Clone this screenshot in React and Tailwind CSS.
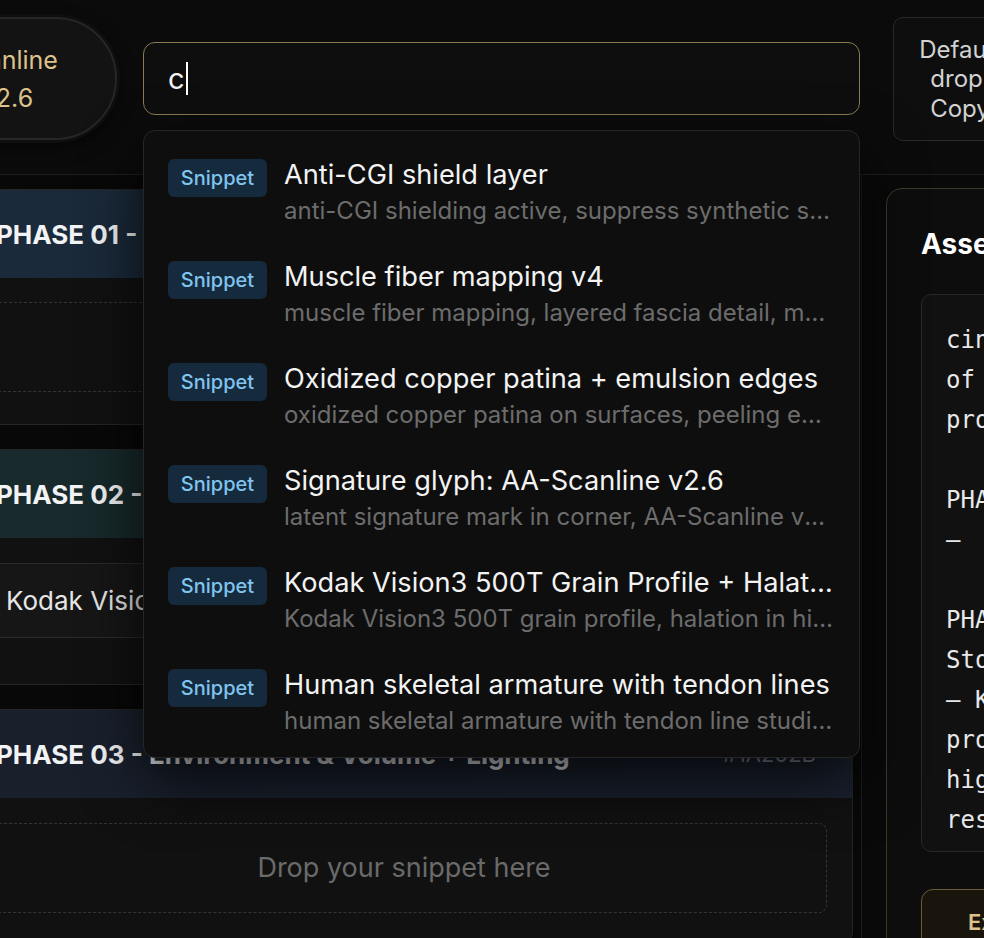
const ITEMS = [
  {
    title: "Anti-CGI shield layer",
    sub: "anti-CGI shielding active, suppress synthetic sheen and plastic rendering",
  },
  {
    title: "Muscle fiber mapping v4",
    sub: "muscle fiber mapping, layered fascia detail, motion-aware striation",
  },
  {
    title: "Oxidized copper patina + emulsion edges",
    sub: "oxidized copper patina on surfaces, peeling emulsion edges",
  },
  {
    title: "Signature glyph: AA-Scanline v2.6",
    sub: "latent signature mark in corner, AA-Scanline v2.6 glyph embedded",
  },
  {
    title: "Kodak Vision3 500T Grain Profile + Halation Bloom",
    sub: "Kodak Vision3 500T grain profile, halation in highlights, soft bloom",
  },
  {
    title: "Human skeletal armature with tendon lines",
    sub: "human skeletal armature with tendon line studies, anatomical overlay",
  },
];

const PROMPT = [
  "cinematic still",
  "of an android",
  "protagonist,",
  "",
  "PHASE 01 - Core",
  "\u2013  anti-CGI",
  "",
  "PHASE 02 - Film",
  "Stock & Grain",
  "\u2013 Kodak Vision3",
  "profile,",
  "highlights,",
  "restrained",
  "grain",
];

function Dropzone() {
  return (
    <div className="h-[90px] rounded-lg border border-dashed border-[#343434] flex items-center justify-center text-[27px] text-[#6a6a6a] whitespace-nowrap">
      Drop your snippet here
    </div>
  );
}

function PhaseHeader({ title, tag, bg }) {
  return (
    <div className={"h-[88px] flex items-center justify-between pl-[40px] pr-[36px] " + bg}>
      <span className="text-[26px] font-bold text-[#f1f3f5] whitespace-nowrap">{title}</span>
      <span className="text-[22px] text-[#8b919b] whitespace-nowrap">{tag}</span>
    </div>
  );
}

export default function App() {
  return (
    <div className="w-[984px] h-[938px] overflow-hidden bg-[#090909] text-white font-['Inter',sans-serif]">
      {/* Header */}
      <header className="flex items-start h-[175px] pt-[17px] border-b border-[#1e1e1e] bg-[#0b0b0b]">
        <div className="shrink-0 ml-[-102px] w-[219px] h-[123px] rounded-full border-2 border-[#262626] bg-[#131313] shadow-[0_0_0_3px_#0f0f0f,0_6px_18px_rgba(0,0,0,0.6)] flex items-center justify-center text-center text-[25px] leading-[38px] text-[#dcc38b]">
          <div>
            Scanline
            <br />
            v2.6
          </div>
        </div>

        <div className="relative shrink-0 ml-[26px] mt-[25px] w-[717px] h-[73px]">
          <div className="h-full rounded-xl border border-[#8a7b52] bg-[#0e0e0e] flex items-center pl-[24px] text-[29px] text-[#f2f2f2]">
            <span>c</span>
            <span className="inline-block w-[2px] h-[33px] bg-white ml-[1px]" />
          </div>

          <div className="absolute left-0 top-[88px] z-50 w-[717px] h-[628px] overflow-hidden rounded-xl border border-[#262626] bg-[#0e0e0e] shadow-[0_24px_60px_rgba(0,0,0,0.75)] pt-[10px]">
            {ITEMS.map((it) => (
              <div key={it.title} className="flex items-start gap-[17px] px-[24px] h-[102px] pt-[18px]">
                <span className="shrink-0 w-[99px] h-[38px] rounded-md bg-[#152a3c] text-[#80c5ef] text-[20px] font-medium flex items-center justify-center">
                  Snippet
                </span>
                <div className="min-w-0 flex-1">
                  <div className="truncate text-[27.2px] leading-[32px] text-[#f3f3f3]">{it.title}</div>
                  <div className="truncate mt-[5px] text-[24px] leading-[30px] text-[#6c6c6c]">{it.sub}</div>
                </div>
              </div>
            ))}
          </div>
        </div>

        <div className="shrink-0 ml-[33px] w-[134px] h-[124px] rounded-[10px] border border-[#2a2a2a] bg-[#0e0e0e] flex items-center justify-center text-center text-[24px] leading-[29.5px] text-[#d2d2d2]">
          <div>
            Default
            <br />
            drop:
            <br />
            Copy
          </div>
        </div>
      </header>

      {/* Body */}
      <div className="flex">
        <div className="shrink-0 w-[862px] h-[800px] border-r border-[#1c1c1c] bg-[#080808] pt-[14px]">
          <div className="flex flex-col gap-[24px] ml-[-45px] w-[898px]">
            <div className="rounded-xl border border-[#252525] bg-[#111111] overflow-hidden">
              <PhaseHeader
                title="PHASE 01 - Subject & Anatomy"
                tag="#1B2B3C"
                bg="bg-gradient-to-r from-[#1b2b3c] to-[#16212d]"
              />
              <div className="px-[25px] pt-[24px] pb-[32px]">
                <Dropzone />
              </div>
            </div>

            <div className="rounded-xl border border-[#252525] bg-[#111111] overflow-hidden">
              <PhaseHeader
                title="PHASE 02 - Film Stock & Grain"
                tag="#182A2C"
                bg="bg-gradient-to-r from-[#182b2d] to-[#141f22]"
              />
              <div className="px-[25px] pt-[25px] pb-[46px]">
                <div className="h-[75px] rounded-lg border border-[#2b2b2b] bg-[#161616] flex items-center pl-[24px] text-[26px] text-[#e6e6e6] whitespace-nowrap">
                  Kodak Vision3 500T Grain Profile + Halation Bloom
                </div>
              </div>
            </div>

            <div className="rounded-xl border border-[#252525] bg-[#111111] overflow-hidden">
              <PhaseHeader
                title="PHASE 03 - Environment & Volume + Lighting"
                tag="#1A202B"
                bg="bg-gradient-to-r from-[#19202c] to-[#1b2230]"
              />
              <div className="px-[25px] pt-[25px] pb-[30px]">
                <Dropzone />
              </div>
            </div>
          </div>
        </div>

        <div className="pl-[24px] pt-[13px]">
          <div className="w-[400px] h-[800px] rounded-2xl border border-[#3f3a28] bg-[#0d0d0d] pt-[38px] pl-[34px]">
            <h2 className="text-[28px] leading-[34px] font-bold text-white whitespace-nowrap">Assembled Prompt</h2>
            <div className="mt-[33px] h-[558px] overflow-hidden rounded-[10px] border border-[#282828] bg-[#111111] pt-[25px] pl-[24px] font-['DejaVu_Sans_Mono',monospace] text-[24px] leading-[40px] text-[#e8e8e8] whitespace-pre">
              {PROMPT.map((l, i) => (
                <div key={i} className="h-[40px]">{l}</div>
              ))}
            </div>
            <button className="mt-[37px] h-[66px] w-[320px] rounded-xl border border-[#6b5b36] bg-[#1a150c] pl-[46px] text-left text-[22px] font-semibold text-[#dcc38b]">
              Export Prompt
            </button>
          </div>
        </div>
      </div>
    </div>
  );
}
